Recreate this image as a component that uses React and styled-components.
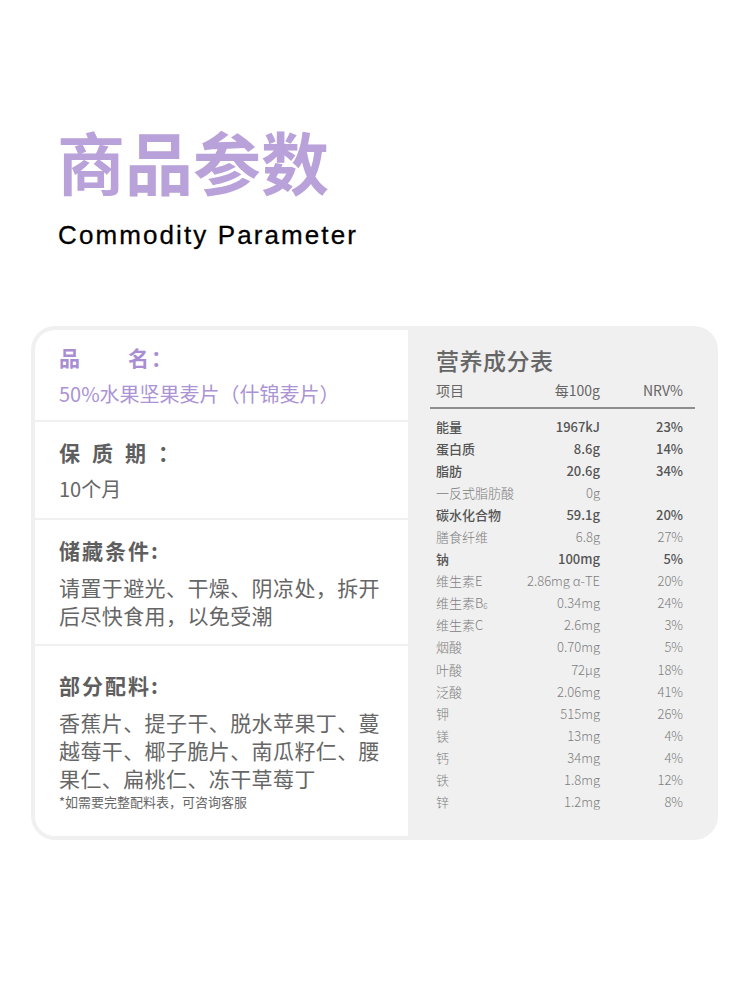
import React from 'react'
import styled, { createGlobalStyle } from 'styled-components'

const GlobalStyle = createGlobalStyle`
  html, body {
    margin: 0;
    padding: 0;
    background: #fff;
  }
  body {
    font-family: "Noto Sans CJK SC", "Noto Sans", sans-serif;
  }
`

const Page = styled.div`
  width: 750px;
  height: 1000px;
  padding-top: 127px;
  box-sizing: border-box;
`

const Title = styled.h1`
  margin: 0 0 0 57px;
  font-size: 68px;
  line-height: 68px;
  font-weight: 700;
  color: #b9a1da;
`

const Subtitle = styled.div`
  margin: 25px 0 0 58px;
  font-family: "Liberation Sans", Arial, sans-serif;
  font-size: 26px;
  line-height: 30px;
  letter-spacing: 2.1px;
  color: #000;
  -webkit-text-stroke: 0.3px #000;
`

const Card = styled.div`
  margin: 76px 0 0 31px;
  width: 687px;
  height: 514px;
  box-sizing: border-box;
  display: flex;
  padding: 4px 0 4px 4px;
  background: #f0f0f0;
  border-radius: 24px;
`

const InfoPanel = styled.div`
  width: 373px;
  display: flex;
  flex-direction: column;
  background: #fff;
  border-radius: 20px 0 0 20px;
`

const Section = styled.div`
  height: ${({ h }) => h}px;
  box-sizing: border-box;
  display: flex;
  flex-direction: column;
  justify-content: center;
  padding-left: 24px;
  border-bottom: ${({ last }) => (last ? 'none' : '2px solid #f0f0f0')};
`

const Label = styled.div`
  font-size: 21px;
  line-height: 30px;
  font-weight: 700;
  letter-spacing: ${({ spacing }) => spacing || 2}px;
  color: ${({ purple }) => (purple ? '#a88dd2' : '#5e5e5e')};
  margin-bottom: 8px;
  white-space: pre;
`

const Value = styled.div`
  font-size: ${({ size }) => size || 21}px;
  line-height: 28px;
  letter-spacing: ${({ size }) => (size ? 0 : 0.4)}px;
  color: ${({ purple }) => (purple ? '#ab93d4' : '#666')};
`

const Note = styled.div`
  font-size: 13px;
  line-height: 20px;
  color: #666;
`

const NutritionPanel = styled.div`
  flex: 1;
  padding: 15px 0 0 28px;
  color: #666;
`

const NutritionTitle = styled.div`
  font-size: 23px;
  line-height: 30px;
  font-weight: 500;
  color: #666;
  letter-spacing: 0.5px;
`

const Grid = styled.div`
  display: grid;
  grid-template-columns: 84px 80px 83px;
  width: 247px;
`

const HeadRow = styled(Grid)`
  margin-top: 5px;
  font-size: 14px;
  line-height: 20px;
  color: #666;
`

const Divider = styled.div`
  margin: 7px 0 7px -6px;
  width: 265px;
  height: 1.5px;
  background: #8e8e8e;
`

const Row = styled(Grid)`
  height: 22.1px;
  font-size: 13px;
  line-height: 22.1px;
  font-weight: ${({ bold }) => (bold ? 500 : 300)};
  color: ${({ bold }) => (bold ? '#555' : '#7e7e7e')};
`

const Cell = styled.div`
  text-align: ${({ right }) => (right ? 'right' : 'left')};
  white-space: nowrap;
`

const Sub = styled.span`
  font-size: 8px;
  line-height: 0;
  vertical-align: -1px;
`

const nutrients = [
  { name: '能量', amount: '1967kJ', nrv: '23%', bold: true },
  { name: '蛋白质', amount: '8.6g', nrv: '14%', bold: true },
  { name: '脂肪', amount: '20.6g', nrv: '34%', bold: true },
  { name: '一反式脂肪酸', amount: '0g', nrv: '' },
  { name: '碳水化合物', amount: '59.1g', nrv: '20%', bold: true },
  { name: '膳食纤维', amount: '6.8g', nrv: '27%' },
  { name: '钠', amount: '100mg', nrv: '5%', bold: true },
  { name: '维生素E', amount: '2.86mg α-TE', nrv: '20%' },
  { name: <>维生素B<Sub>6</Sub></>, amount: '0.34mg', nrv: '24%' },
  { name: '维生素C', amount: '2.6mg', nrv: '3%' },
  { name: '烟酸', amount: '0.70mg', nrv: '5%' },
  { name: '叶酸', amount: '72μg', nrv: '18%' },
  { name: '泛酸', amount: '2.06mg', nrv: '41%' },
  { name: '钾', amount: '515mg', nrv: '26%' },
  { name: '镁', amount: '13mg', nrv: '4%' },
  { name: '钙', amount: '34mg', nrv: '4%' },
  { name: '铁', amount: '1.8mg', nrv: '12%' },
  { name: '锌', amount: '1.2mg', nrv: '8%' },
]

export default function App() {
  return (
    <Page>
      <GlobalStyle />
      <Title>商品参数</Title>
      <Subtitle>Commodity Parameter</Subtitle>

      <Card>
        <InfoPanel>
          <Section h={92}>
            <Label purple spacing={0}>{'品　　名：'}</Label>
            <Value purple size={20}>50%水果坚果麦片（什锦麦片）</Value>
          </Section>
          <Section h={98}>
            <Label spacing={12}>保质期：</Label>
            <Value size={20}>10个月</Value>
          </Section>
          <Section h={126}>
            <Label>储藏条件:</Label>
            <Value>请置于避光、干燥、阴凉处，拆开</Value>
            <Value>后尽快食用，以免受潮</Value>
          </Section>
          <Section h={190} last>
            <Label>部分配料:</Label>
            <Value>香蕉片、提子干、脱水苹果丁、蔓</Value>
            <Value>越莓干、椰子脆片、南瓜籽仁、腰</Value>
            <Value>果仁、扁桃仁、冻干草莓丁</Value>
            <Note>*如需要完整配料表，可咨询客服</Note>
          </Section>
        </InfoPanel>

        <NutritionPanel>
          <NutritionTitle>营养成分表</NutritionTitle>
          <HeadRow>
            <Cell>项目</Cell>
            <Cell right>每100g</Cell>
            <Cell right>NRV%</Cell>
          </HeadRow>
          <Divider />
          {nutrients.map((n, i) => (
            <Row key={i} bold={n.bold}>
              <Cell>{n.name}</Cell>
              <Cell right>{n.amount}</Cell>
              <Cell right>{n.nrv}</Cell>
            </Row>
          ))}
        </NutritionPanel>
      </Card>
    </Page>
  )
}
